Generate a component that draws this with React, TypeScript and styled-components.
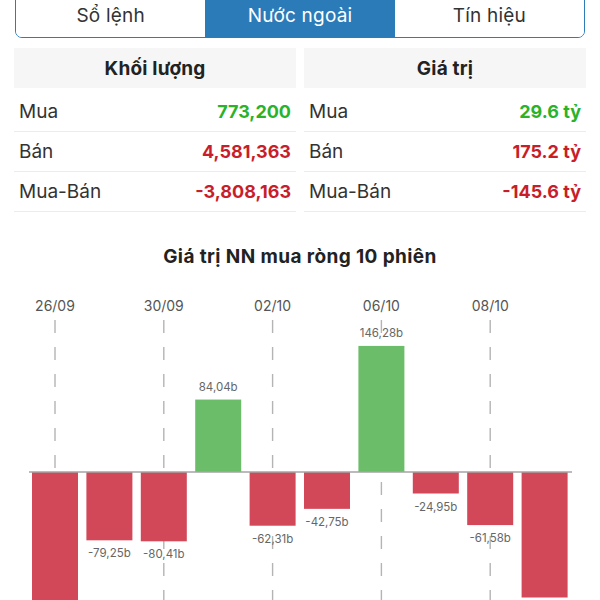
import React from "react";
import styled, { createGlobalStyle } from "styled-components";

const GlobalStyle = createGlobalStyle`
  html, body {
    margin: 0;
    padding: 0;
    overflow: hidden;
    background: #fff;
  }
  body {
    font-family: Inter, "Noto Sans", sans-serif;
    color: #222;
  }
`;

const Page = styled.div`
  width: 600px;
  height: 600px;
  overflow: hidden;
`;

const Content = styled.div`
  padding: 0 14px;
`;

const Tabs = styled.div`
  display: grid;
  grid-template-columns: repeat(3, 1fr);
  margin: -8px 1px 0;
  height: 46px;
  box-sizing: border-box;
  border: 1px solid #2e7cb6;
  border-radius: 7px;
  overflow: hidden;
`;

const Tab = styled.div<{ $active?: boolean }>`
  display: flex;
  align-items: center;
  justify-content: center;
  font-size: 19px;
  letter-spacing: 0.2px;
  color: ${(p) => (p.$active ? "#fff" : "#333")};
  background: ${(p) => (p.$active ? "#2b7bb9" : "#fff")};
`;

const TwoCols = styled.div`
  display: grid;
  grid-template-columns: 1fr 1fr;
  column-gap: 8px;
`;

const HeaderRow = styled(TwoCols)`
  margin-top: 10px;
`;

const HeaderCell = styled.div`
  height: 40px;
  display: flex;
  align-items: center;
  justify-content: center;
  background: #f6f6f6;
  font-size: 19px;
  font-weight: 700;
  letter-spacing: 0.2px;
  color: #222;
`;

const StatsGrid = styled(TwoCols)`
  margin-top: 4px;
`;

const StatRow = styled.div`
  height: 40px;
  box-sizing: border-box;
  display: flex;
  align-items: center;
  justify-content: space-between;
  padding: 0 5px;
  border-bottom: 1px solid #ececec;
`;

const StatLabel = styled.span`
  font-size: 19px;
  color: #333;
`;

const StatValue = styled.span<{ $up: boolean }>`
  font-size: 18px;
  font-weight: 700;
  color: ${(p) => (p.$up ? "#2bb22b" : "#c81e2a")};
`;

const ChartTitle = styled.div`
  margin-top: 34px;
  text-align: center;
  font-size: 19px;
  line-height: 22px;
  font-weight: 700;
  letter-spacing: 0.4px;
  color: #222;
`;

const ChartSvg = styled.svg`
  display: block;
  margin-top: 12px;
  font-family: Inter, "Noto Sans", sans-serif;
`;

type Stat = { label: string; value: string; up: boolean };

const volume: Stat[] = [
  { label: "Mua", value: "773,200", up: true },
  { label: "Bán", value: "4,581,363", up: false },
  { label: "Mua-Bán", value: "-3,808,163", up: false },
];

const amount: Stat[] = [
  { label: "Mua", value: "29.6 tỷ", up: true },
  { label: "Bán", value: "175.2 tỷ", up: false },
  { label: "Mua-Bán", value: "-145.6 tỷ", up: false },
];

const sessions = [
  { date: "26/09", value: -175.62 },
  { date: "27/09", value: -79.25 },
  { date: "30/09", value: -80.41 },
  { date: "01/10", value: 84.04 },
  { date: "02/10", value: -62.31 },
  { date: "03/10", value: -42.75 },
  { date: "06/10", value: 146.28 },
  { date: "07/10", value: -24.95 },
  { date: "08/10", value: -61.58 },
  { date: "09/10", value: -145.6 },
];

const ZERO_Y = 472;
const SCALE = 0.862;
const PITCH = 54.4;
const BAR_W = 46;
const FIRST_X = 32;
const BOTTOM = 600;

const fmt = (v: number) => v.toFixed(2).replace(".", ",") + "b";

function StatColumn({ items }: { items: Stat[] }) {
  return (
    <div>
      {items.map((s) => (
        <StatRow key={s.label}>
          <StatLabel>{s.label}</StatLabel>
          <StatValue $up={s.up}>{s.value}</StatValue>
        </StatRow>
      ))}
    </div>
  );
}

function NetChart() {
  return (
    <ChartSvg width={600} height={320} viewBox="0 280 600 320">
      {sessions.map((s, i) =>
        i % 2 === 0 ? (
          <g key={"g" + s.date}>
            <text
              x={FIRST_X + BAR_W / 2 + i * PITCH}
              y={311}
              textAnchor="middle"
              fontSize={14}
              fill="#555"
            >
              {s.date}
            </text>
            <line
              x1={FIRST_X + BAR_W / 2 + i * PITCH}
              x2={FIRST_X + BAR_W / 2 + i * PITCH}
              y1={320}
              y2={BOTTOM}
              stroke="#b4b4b4"
              strokeWidth={1.4}
              strokeDasharray="13 14"
            />
          </g>
        ) : null
      )}
      {sessions.map((s, i) => {
        const x = FIRST_X + i * PITCH;
        const h = Math.abs(s.value) * SCALE;
        const up = s.value > 0;
        const y = up ? ZERO_Y - h : ZERO_Y;
        const labelY = up ? y - 9 : y + h + 17;
        return (
          <g key={s.date}>
            <rect
              x={x}
              y={y}
              width={BAR_W}
              height={h}
              fill={up ? "#6cbd6a" : "#d24858"}
            />
            {labelY < BOTTOM - 4 && (
              <text
                x={x + BAR_W / 2}
                y={labelY}
                textAnchor="middle"
                fontSize={11.5}
                fill="#666"
              >
                {fmt(s.value)}
              </text>
            )}
          </g>
        );
      })}
      <line
        x1={29}
        x2={572}
        y1={ZERO_Y}
        y2={ZERO_Y}
        stroke="#a4a4a4"
        strokeWidth={1.6}
      />
    </ChartSvg>
  );
}

export default function App() {
  return (
    <Page>
      <GlobalStyle />
      <Content>
        <Tabs>
          <Tab>Sổ lệnh</Tab>
          <Tab $active>Nước ngoài</Tab>
          <Tab>Tín hiệu</Tab>
        </Tabs>
        <HeaderRow>
          <HeaderCell>Khối lượng</HeaderCell>
          <HeaderCell>Giá trị</HeaderCell>
        </HeaderRow>
        <StatsGrid>
          <StatColumn items={volume} />
          <StatColumn items={amount} />
        </StatsGrid>
      </Content>
      <ChartTitle>Giá trị NN mua ròng 10 phiên</ChartTitle>
      <NetChart />
    </Page>
  );
}
